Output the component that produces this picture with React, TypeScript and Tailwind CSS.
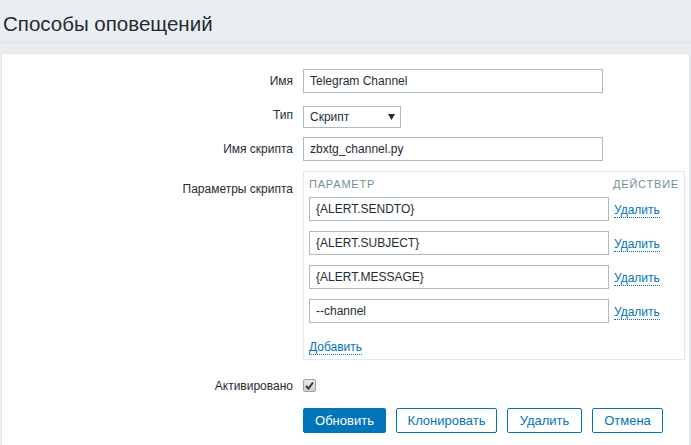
import React from "react";

const font = { fontFamily: '"Liberation Sans", Arial, sans-serif' };

function Field({ value, w }: { value: string; w: string }) {
  return (
    <div
      className={`h-[24px] ${w} border border-[#acbbc2] bg-white px-[6px] flex items-center text-[12px] text-[#1f2c33]`}
    >
      {value}
    </div>
  );
}

function Link({ children }: { children: React.ReactNode }) {
  return (
    <span className="text-[12px] leading-[14px] text-[#0275b8] border-b border-dotted border-[#0275b8]">
      {children}
    </span>
  );
}

function Label({ children, top }: { children: React.ReactNode; top?: boolean }) {
  return (
    <div
      className={`w-[291px] shrink-0 text-right text-[12px] text-[#1f2c33] ${
        top ? "pt-[4px]" : "self-center"
      }`}
    >
      {children}
    </div>
  );
}

export default function App() {
  const params = ["{ALERT.SENDTO}", "{ALERT.SUBJECT}", "{ALERT.MESSAGE}", "--channel"];
  return (
    <div className="w-[691px] h-[445px] overflow-hidden bg-[#ebeef0]" style={font}>
      <div className="h-[43px] border-b border-[#dfe4e7] flex items-end">
        <h1 className="pl-[3px] pb-[6px] text-[20.5px] leading-[24px] text-[#1f2c33]">
          Способы оповещений
        </h1>
      </div>
      <div className="mt-[10px] ml-px mr-px h-[400px] bg-white border border-[#dfe4e7] pt-[15px]">
        <div className="flex flex-col gap-[10px]">
          <div className="flex gap-[10px] h-[24px]">
            <Label>Имя</Label>
            <Field value="Telegram Channel" w="w-[300px]" />
          </div>
          <div className="flex gap-[10px] h-[24px] items-center">
            <Label>Тип</Label>
            <div className="h-[22px] w-[98px] mt-[3px] border border-[#acbbc2] bg-white pl-[6px] pr-[5px] flex items-center justify-between text-[12px] text-[#1f2c33]">
              <span>Скрипт</span>
              <svg width="7" height="6" viewBox="0 0 7 6">
                <path d="M0 0 H7 L3.5 6 Z" fill="#1f2c33" />
              </svg>
            </div>
          </div>
          <div className="flex gap-[10px] h-[24px]">
            <Label>Имя скрипта</Label>
            <Field value="zbxtg_channel.py" w="w-[300px]" />
          </div>
          <div className="flex gap-[10px]">
            <Label top>
              <div className="pt-[5px]">Параметры скрипта</div>
            </Label>
            <div className="w-[382px] h-[189px] border border-[#e5e9eb] pl-[5px] pr-[5px] pt-[4px]">
              <div className="flex h-[16px] items-center text-[11px] tracking-[0.8px] text-[#768d99] uppercase">
                <div className="w-[305px]">Параметр</div>
                <div>Действие</div>
              </div>
              <div className="mt-[5px] flex flex-col gap-[10px]">
                {params.map((p) => (
                  <div key={p} className="flex items-center h-[24px]">
                    <Field value={p} w="w-[300px]" />
                    <div className="ml-[5px]">
                      <Link>Удалить</Link>
                    </div>
                  </div>
                ))}
              </div>
              <div className="mt-[11px]">
                <Link>Добавить</Link>
              </div>
            </div>
          </div>
          <div className="flex gap-[10px] h-[13px] mt-[9px]">
            <Label>Активировано</Label>
            <span className="w-[13px] h-[13px] rounded-[2px] border border-[#a3a3a3] bg-gradient-to-b from-[#e8e8e8] to-[#cfcfcf] flex items-center justify-center">
              <svg width="9" height="9" viewBox="0 0 9 9">
                <path d="M1 5 L3.5 7.5 L8 1.5" stroke="#3a3a3a" strokeWidth="2" fill="none" />
              </svg>
            </span>
          </div>
          <div className="flex h-[25px] mt-[6px]">
            <div className="w-[301px] shrink-0" />
            <div className="flex gap-[10px] text-[13px]">
              <button className="h-[25px] px-[11px] w-[83px] rounded-[2px] bg-[#0275b8] border border-[#0275b8] text-white">
                Обновить
              </button>
              <button className="h-[25px] w-[101px] rounded-[2px] bg-white border border-[#0275b8] text-[#0275b8]">
                Клонировать
              </button>
              <button className="h-[25px] w-[75px] rounded-[2px] bg-white border border-[#0275b8] text-[#0275b8]">
                Удалить
              </button>
              <button className="h-[25px] w-[71px] rounded-[2px] bg-white border border-[#0275b8] text-[#0275b8]">
                Отмена
              </button>
            </div>
          </div>
        </div>
      </div>
    </div>
  );
}
